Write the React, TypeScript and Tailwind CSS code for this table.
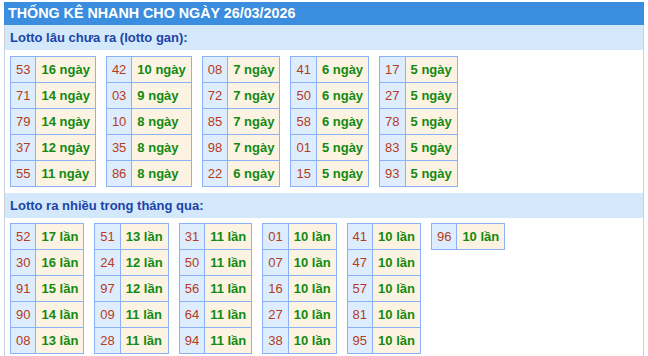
import React from 'react';

const gan: [string, string][][] = [
  [['53', '16 ngày'], ['71', '14 ngày'], ['79', '14 ngày'], ['37', '12 ngày'], ['55', '11 ngày']],
  [['42', '10 ngày'], ['03', '9 ngày'], ['10', '8 ngày'], ['35', '8 ngày'], ['86', '8 ngày']],
  [['08', '7 ngày'], ['72', '7 ngày'], ['85', '7 ngày'], ['98', '7 ngày'], ['22', '6 ngày']],
  [['41', '6 ngày'], ['50', '6 ngày'], ['58', '6 ngày'], ['01', '5 ngày'], ['15', '5 ngày']],
  [['17', '5 ngày'], ['27', '5 ngày'], ['78', '5 ngày'], ['83', '5 ngày'], ['93', '5 ngày']],
];

const nhieu: [string, string][][] = [
  [['52', '17 lần'], ['30', '16 lần'], ['91', '15 lần'], ['90', '14 lần'], ['08', '13 lần']],
  [['51', '13 lần'], ['24', '12 lần'], ['97', '12 lần'], ['09', '11 lần'], ['28', '11 lần']],
  [['31', '11 lần'], ['50', '11 lần'], ['56', '11 lần'], ['64', '11 lần'], ['94', '11 lần']],
  [['01', '10 lần'], ['07', '10 lần'], ['16', '10 lần'], ['27', '10 lần'], ['38', '10 lần']],
  [['41', '10 lần'], ['47', '10 lần'], ['57', '10 lần'], ['81', '10 lần'], ['95', '10 lần']],
  [['96', '10 lần']],
];

function Bang({ rows }: { rows: [string, string][] }) {
  return (
    <table className="border-collapse self-start">
      <tbody>
        {rows.map(([so, val]) => (
          <tr key={so} className="h-[26px]">
            <td className="border border-[#8db1f7] bg-[#deedfd] px-[5px] text-center text-[#b53b20]">{so}</td>
            <td className="border border-[#8db1f7] bg-[#fdf3e2] px-[5px] font-bold text-[#128a12]">{val}</td>
          </tr>
        ))}
      </tbody>
    </table>
  );
}

export default function App() {
  return (
    <div className="pt-[2px] pl-[4px] w-[644px] font-['Liberation_Sans',Arial,sans-serif] text-[13px] leading-none">
      <div className="border-x border-[#c8d0dc]">
        <div className="-mx-px h-[23px] bg-[#3b8de0] pl-[4px] flex items-center text-white font-bold text-[14.3px]">
          THỐNG KÊ NHANH CHO NGÀY 26/03/2026
        </div>
        <div className="h-[25px] bg-[#d4e8fc] pl-[5px] flex items-center text-[#1b44a6] font-bold text-[13px]">
          Lotto lâu chưa ra (lotto gan):
        </div>
        <div className="flex gap-[10px] px-[5px] pt-[6px] pb-[6px]">
          {gan.map((t, i) => (
            <Bang key={i} rows={t} />
          ))}
        </div>
        <div className="h-[25px] bg-[#d4e8fc] pl-[5px] flex items-center text-[#1b44a6] font-bold text-[13px]">
          Lotto ra nhiều trong tháng qua:
        </div>
        <div className="flex gap-[10px] px-[5px] pt-[5px] pb-[6px]">
          {nhieu.map((t, i) => (
            <Bang key={i} rows={t} />
          ))}
        </div>
      </div>
    </div>
  );
}
